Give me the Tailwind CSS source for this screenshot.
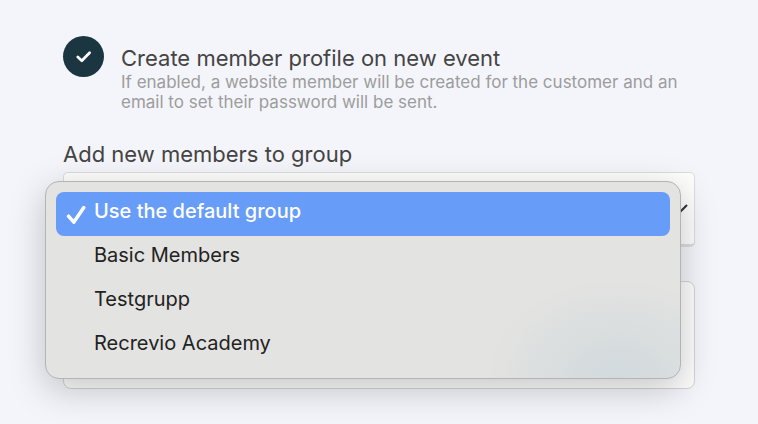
<!DOCTYPE html>
<html lang="en">
<head>
  <meta charset="UTF-8" />
  <meta name="viewport" content="width=device-width, initial-scale=1.0" />
  <title>Member settings</title>
  <script src="https://cdn.jsdelivr.net/npm/@tailwindcss/browser@4"></script>
</head>
<body class="bg-[#f4f5fa] text-[#444444] font-['Inter',sans-serif]">
  <form class="px-[63px] pt-9 pb-9">
    <!-- Member profile toggle -->
    <div class="flex items-start gap-[17px]">
      <div class="grid shrink-0">
        <input type="checkbox" id="create_member" checked class="col-start-1 row-start-1 size-[41px] appearance-none rounded-full bg-[#1b3641]">
        <svg class="col-start-1 row-start-1 place-self-center pointer-events-none" width="16" height="12" viewBox="0 0 16 12" fill="none" stroke="#fff" stroke-width="2.7" stroke-linecap="round" stroke-linejoin="round">
          <path d="M1.8 6 5.8 9.8 13.6 1.8" />
        </svg>
      </div>
      <div class="pt-2">
        <label for="create_member" class="block text-[22px] leading-7">Create member profile on new event</label>
        <p class="text-[17px] leading-5 text-[#9c9c9c]">If enabled, a website member will be created for the customer and an email to set their password will be sent.</p>
      </div>
    </div>

    <!-- Group select with its open menu -->
    <div class="mt-7">
      <label for="member_group" class="block text-[22px] leading-7">Add new members to group</label>
      <div class="relative mt-1">
        <select id="member_group" class="block w-full h-[75px] appearance-none rounded-[5px] border border-b-3 border-[#dcdcdc] bg-[#fdfdfc] px-5 text-xl">
          <option>Use the default group</option>
          <option>Basic Members</option>
          <option>Testgrupp</option>
          <option>Recrevio Academy</option>
        </select>
        <svg class="absolute right-[7px] top-8 pointer-events-none" width="18" height="11" viewBox="0 0 18 11" fill="none" stroke="#333" stroke-width="2">
          <path d="M1 1 9 9 17 1" />
        </svg>

        <div role="listbox" aria-label="Add new members to group" class="absolute z-10 -left-[18px] right-[14px] top-[9px] rounded-[14px] border border-[#b4b4b6] bg-[#e3e3e1] bg-[radial-gradient(ellipse_130px_100px_at_90%_100%,#d3dadd,#d6dcde_30%,#e3e3e100)] p-[10px] text-xl text-[#222222] shadow-[0_10px_36px_rgba(0,0,20,0.22)]">
          <button type="button" role="option" aria-selected="true" class="flex h-11 w-full items-center gap-2 rounded-lg bg-[#679cf9] pb-1.5 pl-2.5 font-medium text-white">
            <svg class="mt-2" width="20" height="20" viewBox="0 0 20 20" fill="none" stroke="#fff" stroke-width="3.5" stroke-linecap="round" stroke-linejoin="round">
              <path d="M2.5 11.2 7.8 17.2 17.8 2.6" />
            </svg>
            Use the default group
          </button>
          <button type="button" role="option" class="flex h-11 w-full items-center pb-1.5 pl-[38px]">Basic Members</button>
          <button type="button" role="option" class="flex h-11 w-full items-center pb-1.5 pl-[38px]">Testgrupp</button>
          <button type="button" role="option" class="flex h-11 w-full items-center pb-1.5 pl-[38px]">Recrevio Academy</button>
        </div>
      </div>
    </div>

    <div class="mt-[34px] h-[108px] rounded-lg border border-[#d4d4d4] bg-[#fdfdfc]"></div>
  </form>
</body>
</html>
